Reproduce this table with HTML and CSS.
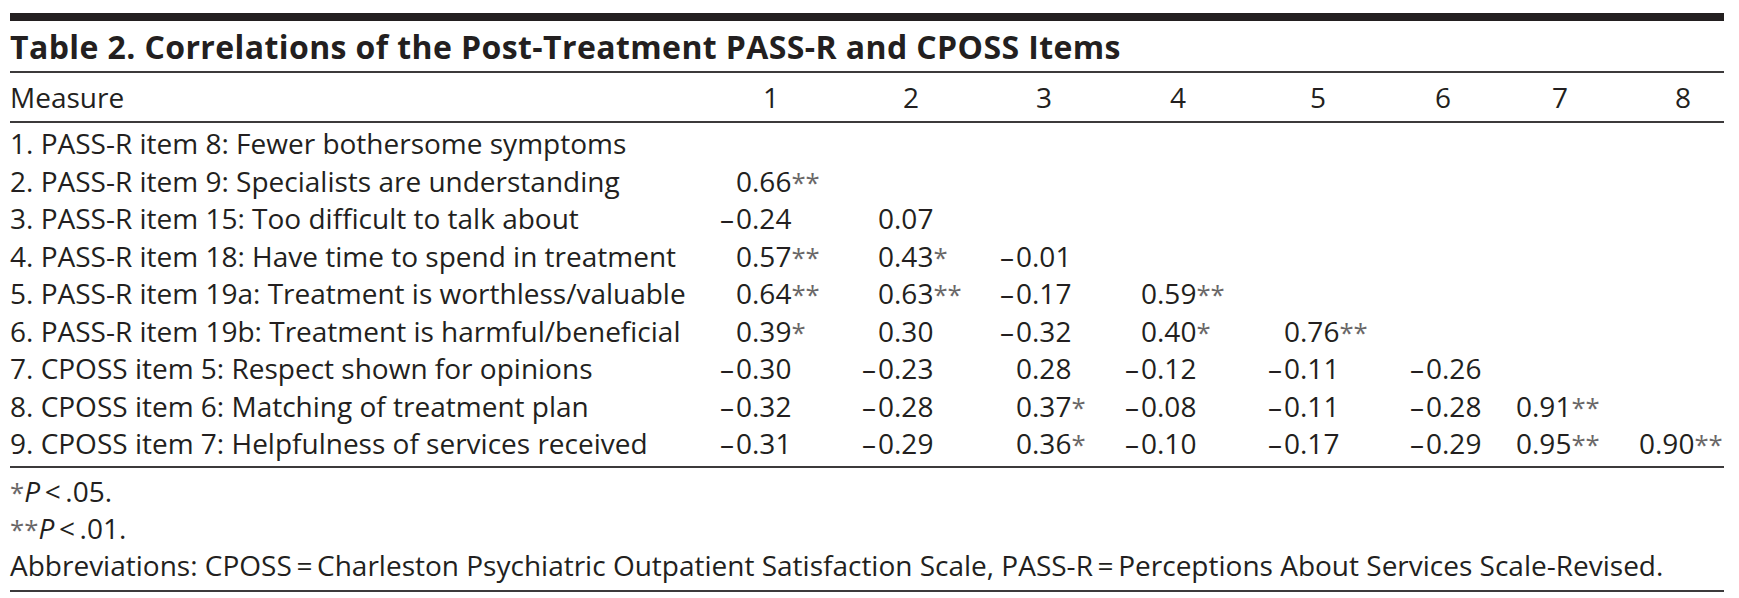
FILE: index.html
```html
<!DOCTYPE html>
<html lang="en">
<head>
<meta charset="utf-8">
<title>Table 2</title>
<link rel="stylesheet" href="styles.css">
</head>
<body>
<div class="tbl">
  <div class="topbar"></div>
  <h1 class="title">Table 2. Correlations of the Post-Treatment PASS-R and CPOSS Items</h1>
  <div class="cols head">
    <div class="lab">Measure</div>
    <div class="hn">1</div><div class="hn">2</div><div class="hn">3</div><div class="hn">4</div>
    <div class="hn">5</div><div class="hn">6</div><div class="hn">7</div><div class="hn">8</div>
  </div>
  <div class="body">
    <div class="cols row">
      <div class="lab">1. PASS-R item 8: Fewer bothersome symptoms</div>
      <div class="v"></div><div class="v"></div><div class="v"></div><div class="v"></div><div class="v"></div><div class="v"></div><div class="v"></div><div class="v"></div>
    </div>
    <div class="cols row">
      <div class="lab">2. PASS-R item 9: Specialists are understanding</div>
      <div class="v">0.66<span class="sig">**</span></div><div class="v"></div><div class="v"></div><div class="v"></div><div class="v"></div><div class="v"></div><div class="v"></div><div class="v"></div>
    </div>
    <div class="cols row">
      <div class="lab">3. PASS-R item 15: Too difficult to talk about</div>
      <div class="v"><span class="neg">–</span>0.24</div><div class="v">0.07</div><div class="v"></div><div class="v"></div><div class="v"></div><div class="v"></div><div class="v"></div><div class="v"></div>
    </div>
    <div class="cols row">
      <div class="lab">4. PASS-R item 18: Have time to spend in treatment</div>
      <div class="v">0.57<span class="sig">**</span></div><div class="v">0.43<span class="sig">*</span></div><div class="v"><span class="neg">–</span>0.01</div><div class="v"></div><div class="v"></div><div class="v"></div><div class="v"></div><div class="v"></div>
    </div>
    <div class="cols row">
      <div class="lab">5. PASS-R item 19a: Treatment is worthless/valuable</div>
      <div class="v">0.64<span class="sig">**</span></div><div class="v">0.63<span class="sig">**</span></div><div class="v"><span class="neg">–</span>0.17</div><div class="v">0.59<span class="sig">**</span></div><div class="v"></div><div class="v"></div><div class="v"></div><div class="v"></div>
    </div>
    <div class="cols row">
      <div class="lab">6. PASS-R item 19b: Treatment is harmful/beneficial</div>
      <div class="v">0.39<span class="sig">*</span></div><div class="v">0.30</div><div class="v"><span class="neg">–</span>0.32</div><div class="v">0.40<span class="sig">*</span></div><div class="v">0.76<span class="sig">**</span></div><div class="v"></div><div class="v"></div><div class="v"></div>
    </div>
    <div class="cols row">
      <div class="lab">7. CPOSS item 5: Respect shown for opinions</div>
      <div class="v"><span class="neg">–</span>0.30</div><div class="v"><span class="neg">–</span>0.23</div><div class="v">0.28</div><div class="v"><span class="neg">–</span>0.12</div><div class="v"><span class="neg">–</span>0.11</div><div class="v"><span class="neg">–</span>0.26</div><div class="v"></div><div class="v"></div>
    </div>
    <div class="cols row">
      <div class="lab">8. CPOSS item 6: Matching of treatment plan</div>
      <div class="v"><span class="neg">–</span>0.32</div><div class="v"><span class="neg">–</span>0.28</div><div class="v">0.37<span class="sig">*</span></div><div class="v"><span class="neg">–</span>0.08</div><div class="v"><span class="neg">–</span>0.11</div><div class="v"><span class="neg">–</span>0.28</div><div class="v">0.91<span class="sig">**</span></div><div class="v"></div>
    </div>
    <div class="cols row">
      <div class="lab">9. CPOSS item 7: Helpfulness of services received</div>
      <div class="v"><span class="neg">–</span>0.31</div><div class="v"><span class="neg">–</span>0.29</div><div class="v">0.36<span class="sig">*</span></div><div class="v"><span class="neg">–</span>0.10</div><div class="v"><span class="neg">–</span>0.17</div><div class="v"><span class="neg">–</span>0.29</div><div class="v">0.95<span class="sig">**</span></div><div class="v">0.90<span class="sig">**</span></div>
    </div>
  </div>
  <div class="notes">
    <p class="note"><span class="sig">*</span><i>P</i>&thinsp;&lt;&thinsp;.05.</p>
    <p class="note"><span class="sig">**</span><i>P</i>&thinsp;&lt;&thinsp;.01.</p>
    <p class="note">Abbreviations: CPOSS&thinsp;=&thinsp;Charleston Psychiatric Outpatient Satisfaction Scale, PASS-R&thinsp;=&thinsp;Perceptions About Services Scale-Revised.</p>
  </div>
</div>
</body>
</html>
```

FILE: styles.css
```css
html, body {
  margin: 0;
  padding: 0;
  background: #ffffff;
}

body {
  font-family: "Open Sans", "Noto Sans", sans-serif;
  color: #231f20;
}

.tbl {
  width: 1714px;
  margin: 13px 0 0 10px;
}

.topbar {
  height: 8px;
  background: #231f20;
}

.title {
  margin: 0;
  height: 50px;
  line-height: 52px;
  font-size: 32px;
  font-weight: 700;
  letter-spacing: 0.4px;
  border-bottom: 2px solid #3c3a3b;
  white-space: nowrap;
}

.cols {
  display: grid;
  grid-template-columns: 704px 144px 136px 122px 148px 140px 90px 123px 107px;
  font-size: 28px;
  white-space: nowrap;
}

.head {
  height: 48px;
  line-height: 48px;
  border-bottom: 2px solid #3c3a3b;
}

.head .hn:nth-child(2) { padding-left: 49px; }
.head .hn:nth-child(3) { padding-left: 45px; }
.head .hn:nth-child(4) { padding-left: 42px; }
.head .hn:nth-child(5) { padding-left: 54px; }
.head .hn:nth-child(6) { padding-left: 46px; }
.head .hn:nth-child(7) { padding-left: 31px; }
.head .hn:nth-child(8) { padding-left: 58px; }
.head .hn:nth-child(9) { padding-left: 58px; }

.body {
  padding: 2px 0 3.5px;
  border-bottom: 2px solid #3c3a3b;
}

.row {
  height: 37.5px;
  line-height: 37.5px;
}

.v {
  padding-left: 22px;
}

.row .v:nth-child(3) { padding-left: 20px; }
.row .v:nth-child(5) { padding-left: 25px; }
.row .v:nth-child(6) { padding-left: 20px; }

.neg {
  display: inline-block;
  width: 16px;
  margin-left: -16px;
}

.sig {
  color: #6a6768;
  font-size: 0.92em;
}

.notes {
  padding: 5px 0 7px;
  border-bottom: 2px solid #3c3a3b;
}

.note {
  margin: 0;
  font-size: 28px;
  line-height: 36px;
  white-space: nowrap;
}
```
